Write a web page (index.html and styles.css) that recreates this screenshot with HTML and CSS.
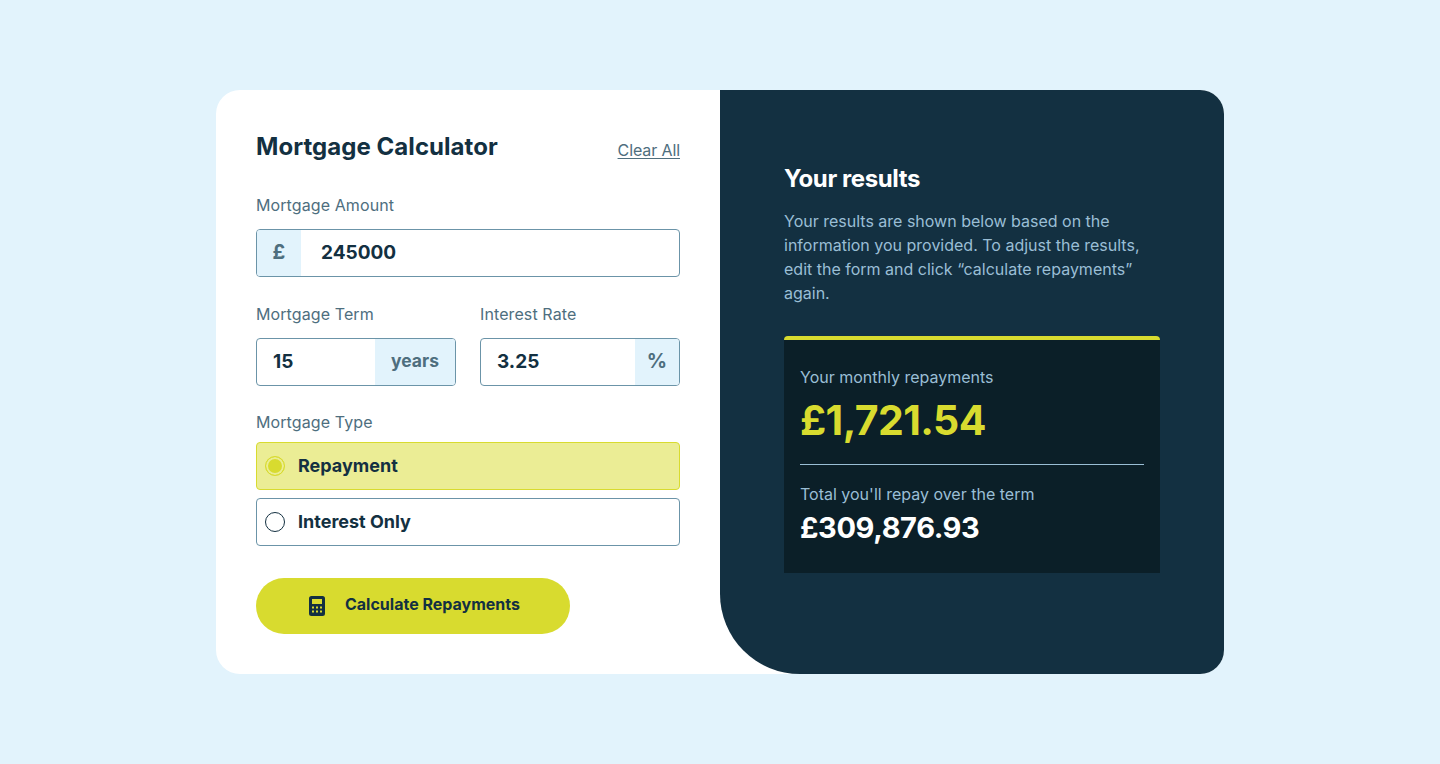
FILE: index.html
```html
<!DOCTYPE html>
<html lang="en">
<head>
  <meta charset="UTF-8">
  <title>Mortgage Calculator</title>
  <meta name="viewport" content="width=device-width, initial-scale=1.0">
  <link rel="stylesheet" href="styles.css">
</head>
<body>
  <main class="calculator">
    <form class="form-panel">
      <div class="form-head">
        <h1>Mortgage Calculator</h1>
        <a class="clear-link" href="#">Clear All</a>
      </div>

      <div class="field">
        <label class="field-label">Mortgage Amount</label>
        <div class="input-box">
          <span class="affix affix-pound">£</span>
          <span class="value value-amount">245000</span>
        </div>
      </div>

      <div class="field-row">
        <div class="field field-term">
          <label class="field-label">Mortgage Term</label>
          <div class="input-box">
            <span class="value">15</span>
            <span class="affix affix-years">years</span>
          </div>
        </div>
        <div class="field field-rate">
          <label class="field-label">Interest Rate</label>
          <div class="input-box">
            <span class="value">3.25</span>
            <span class="affix affix-percent">%</span>
          </div>
        </div>
      </div>

      <div class="field field-type">
        <label class="field-label">Mortgage Type</label>
        <div class="radio-option selected">
          <span class="radio-dot"></span>
          <span>Repayment</span>
        </div>
        <div class="radio-option">
          <span class="radio-dot"></span>
          <span>Interest Only</span>
        </div>
      </div>

      <button class="submit-btn" type="button">
        <svg class="calc-icon" width="16" height="20" viewBox="0 0 16 20" aria-hidden="true">
          <path fill="#133041" fill-rule="evenodd" d="M2.5 0h11A2.5 2.5 0 0 1 16 2.500v15a2.500 2.500 0 0 1-2.500 2.500h-11A2.500 2.500 0 0 1 0 17.500v-15A2.500 2.500 0 0 1 2.500 0ZM3 3v5h10V3H3Zm0 7.500v2h2v-2H3Zm4 0v2h2v-2H7Zm4 0v2h2v-2h-2ZM3 14.500v2h2v-2H3Zm4 0v2h2v-2H7Zm4 0v2h2v-2h-2Z"/>
        </svg>
        <span class="submit-text">Calculate Repayments</span>
      </button>
    </form>

    <section class="results-panel">
      <h2>Your results</h2>
      <p class="results-text">Your results are shown below based on the information you provided. To adjust the results, edit the form and click “calculate repayments” again.</p>
      <div class="results-card">
        <div class="card-label">Your monthly repayments</div>
        <div class="monthly-value">£1,721.54</div>
        <hr class="card-line">
        <div class="card-label">Total you'll repay over the term</div>
        <div class="total-value">£309,876.93</div>
      </div>
    </section>
  </main>
</body>
</html>
```

FILE: styles.css
```css
* {
  box-sizing: border-box;
}
body {
  margin: 0;
  min-height: 764px;
  background: #e2f3fc;
  font-family: Inter, 'Open Sans', sans-serif;
  color: #133041;
  display: flex;
  align-items: center;
  justify-content: center;
  overflow: hidden;
}
.calculator {
  width: 1008px;
  height: 584px;
  background: #fff;
  border-radius: 24px;
  display: flex;
  overflow: hidden;
}
.form-panel {
  width: 504px;
  padding: 40px;
}
.form-head {
  display: flex;
  justify-content: space-between;
  align-items: flex-start;
  height: 64px;
}
h1 {
  margin: 1px 0 0;
  font-size: 24px;
  line-height: 32px;
  font-weight: 700;
  letter-spacing: 0.05px;
}
.clear-link {
  margin-top: 11px;
  font-size: 16px;
  line-height: 18px;
  letter-spacing: -0.1px;
  color: #4e6e7e;
  text-decoration: underline;
  text-underline-offset: 2px;
}
.field-label {
  display: block;
  height: 24px;
  margin-bottom: 11px;
  font-size: 16px;
  line-height: 22px;
  letter-spacing: 0.1px;
  color: #4e6e7e;
}
.input-box {
  height: 48px;
  display: flex;
  align-items: stretch;
  border: 1px solid #6b94a8;
  border-radius: 4px;
  overflow: hidden;
  font-size: 19px;
  font-weight: 700;
}
.affix {
  display: flex;
  align-items: center;
  justify-content: center;
  padding-bottom: 2px;
  background: #e2f3fc;
  color: #4e6e7e;
  flex-shrink: 0;
}
.affix-pound {
  width: 44px;
  font-size: 20px;
}
.affix-years {
  width: 80px;
  padding-bottom: 4px;
  font-size: 17.5px;
}
.affix-percent {
  width: 44px;
  font-size: 20px;
}
.value {
  flex: 1;
  display: flex;
  align-items: center;
  padding-left: 16px;
  padding-bottom: 1px;
}
.value-amount {
  padding-left: 20px;
}
.field-row {
  display: flex;
  gap: 24px;
  margin-top: 26px;
}
.field-row .field {
  width: 200px;
}
.field-type {
  margin-top: 25px;
}
.field-type .field-label {
  margin-bottom: 7px;
}
.radio-option {
  height: 48px;
  display: flex;
  align-items: center;
  gap: 13px;
  padding-left: 8px;
  padding-bottom: 1px;
  margin-bottom: 8px;
  border: 1px solid #6b94a8;
  border-radius: 4px;
  font-size: 18px;
  font-weight: 700;
}
.radio-option.selected {
  background: #ebed95;
  border-color: #d8db2f;
}
.radio-dot {
  width: 20px;
  height: 20px;
  border: 1.5px solid #133041;
  border-radius: 50%;
  flex-shrink: 0;
}
.selected .radio-dot {
  border-color: #d8db2f;
  background: #d8db2f;
  box-shadow: inset 0 0 0 2px #ebed95;
}
.submit-btn {
  display: flex;
  align-items: center;
  justify-content: center;
  gap: 20px;
  width: 314px;
  height: 56px;
  margin-top: 32px;
  padding: 0 0 0 3px;
  border: none;
  border-radius: 28px;
  background: #d8db2f;
  color: #133041;
  font-family: inherit;
  font-size: 16px;
  font-weight: 700;
}
.submit-text {
  padding-bottom: 4px;
}
.results-panel {
  width: 504px;
  padding: 73px 64px 0;
  background: #133041;
  border-bottom-left-radius: 80px;
  color: #fff;
}
h2 {
  margin: 0;
  font-size: 24px;
  line-height: 32px;
  font-weight: 700;
  letter-spacing: -0.4px;
}
.results-text {
  margin: 14px 0 31px;
  font-size: 16px;
  line-height: 24px;
  color: #9abed5;
}
.results-card {
  height: 237px;
  padding: 25px 16px 0;
  background: #0b1f28;
  border-top: 4px solid #d8db2f;
  border-radius: 4px 4px 0 0;
}
.card-label {
  font-size: 16px;
  line-height: 24px;
  color: #9abed5;
}
.monthly-value {
  margin-top: 6px;
  font-size: 41px;
  line-height: 50px;
  font-weight: 700;
  letter-spacing: -0.6px;
  color: #d8db2f;
}
.card-line {
  margin: 19px 0 17px;
  height: 1px;
  border: none;
  background: #9abed5;
}
.total-value {
  margin-top: 3px;
  font-size: 29px;
  line-height: 38px;
  font-weight: 700;
  letter-spacing: -0.4px;
}
```
